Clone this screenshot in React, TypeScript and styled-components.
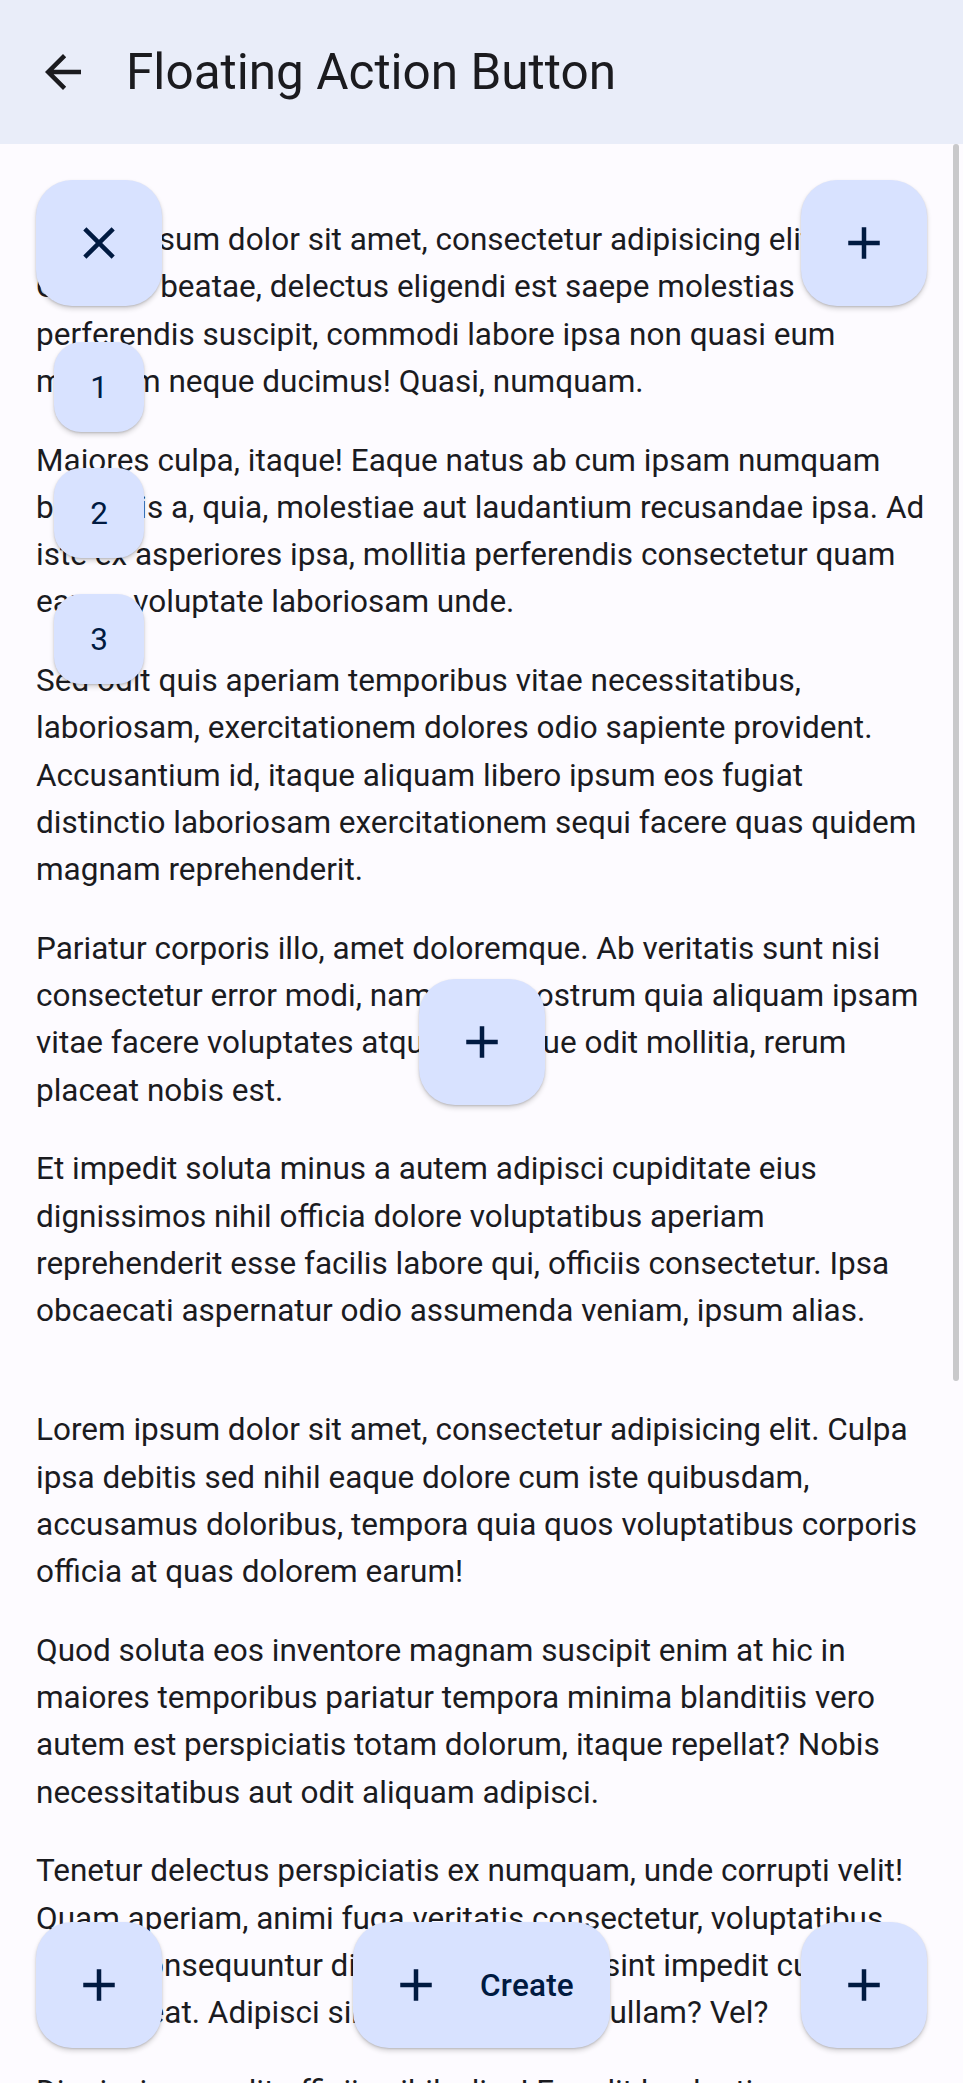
import React from 'react'
import styled, { createGlobalStyle } from 'styled-components'

const GlobalStyle = createGlobalStyle`
  html, body {
    margin: 0;
    padding: 0;
    background: #fdfbff;
  }
  body {
    font-family: Roboto, "Liberation Sans", sans-serif;
    color: #1b1b1f;
  }
`

const Screen = styled.div`
  position: relative;
  width: 100%;
  height: 2083px;
  overflow: hidden;
  display: flex;
  flex-direction: column;
  background: #fdfbff;
`

const TopBar = styled.header`
  flex: 0 0 144px;
  display: flex;
  align-items: center;
  gap: 36px;
  padding-left: 36px;
  background: #e9edf9;
`

const Title = styled.h1`
  margin: 0;
  font-size: 49.5px;
  font-weight: 400;
  color: #1b1b1f;
  letter-spacing: 0;
`

const Content = styled.main`
  position: relative;
  flex: 1;
  overflow: hidden;
  padding: 72px 36px 0;
`

const Block = styled.section<{ $gap?: number }>`
  margin-top: ${p => p.$gap ?? 0}px;
`

const Para = styled.p`
  margin: 0 0 31.5px;
  font-size: 31.5px;
  line-height: 47.25px;
  color: #1b1b1f;
`

const ScrollThumb = styled.div`
  position: absolute;
  top: 0;
  right: 4px;
  width: 6px;
  height: 1237px;
  border-radius: 3px;
  background: #c9c9cb;
`

const Fab = styled.button<{ $size?: 'small' | 'large' }>`
  display: flex;
  align-items: center;
  justify-content: center;
  width: ${p => (p.$size === 'small' ? 90 : 126)}px;
  height: ${p => (p.$size === 'small' ? 90 : 126)}px;
  padding: 0;
  border: none;
  border-radius: ${p => (p.$size === 'small' ? 27 : 36)}px;
  background: #d8e2ff;
  color: #001a41;
  font-family: Roboto, "Liberation Sans", sans-serif;
  font-size: 31.5px;
  box-shadow: 0 3px 5px rgba(0, 0, 0, 0.16), 0 1px 2px rgba(0, 0, 0, 0.14);
  cursor: pointer;
`

const ExtendedFab = styled(Fab)`
  width: auto;
  padding: 0 36px;
  gap: 37px;
  font-weight: 500;
  letter-spacing: 0.2px;
`

const TopRow = styled.div`
  position: absolute;
  top: 180px;
  left: 36px;
  right: 36px;
  display: flex;
  justify-content: space-between;
  align-items: flex-start;
`

const FabColumn = styled.div`
  display: flex;
  flex-direction: column;
  align-items: center;
  gap: 36px;
`

const CenterSpot = styled.div`
  position: absolute;
  top: 50%;
  left: 50%;
  transform: translate(-50%, -50%);
`

const BottomRow = styled.div`
  position: absolute;
  bottom: 35px;
  left: 36px;
  right: 36px;
  display: flex;
  justify-content: space-between;
  align-items: center;
`

const Icon = ({ d, size = 54 }: { d: string, size?: number }) => (
  <svg width={size} height={size} viewBox="0 0 24 24" fill="currentColor" aria-hidden="true">
    <path d={d} />
  </svg>
)

const ADD = 'M19 13h-6v6h-2v-6H5v-2h6V5h2v6h6v2z'
const CLOSE = 'M19 6.41L17.59 5 12 10.59 6.41 5 5 6.41 10.59 12 5 17.59 6.41 19 12 13.41 17.59 19 19 17.59 13.41 12z'
const BACK = 'M20 11H7.83l5.59-5.59L12 4l-8 8 8 8 1.41-1.41L7.83 13H20v-2z'

const firstBlock = [
  'Lorem ipsum dolor sit amet, consectetur adipisicing elit. Quaeras beatae, delectus eligendi est saepe molestias perferendis suscipit, commodi labore ipsa non quasi eum magnam neque ducimus! Quasi, numquam.',
  'Maiores culpa, itaque! Eaque natus ab cum ipsam numquam blanditiis a, quia, molestiae aut laudantium recusandae ipsa. Ad iste ex asperiores ipsa, mollitia perferendis consectetur quam earum voluptate laboriosam unde.',
  'Sed odit quis aperiam temporibus vitae necessitatibus, laboriosam, exercitationem dolores odio sapiente provident. Accusantium id, itaque aliquam libero ipsum eos fugiat distinctio laboriosam exercitationem sequi facere quas quidem magnam reprehenderit.',
  'Pariatur corporis illo, amet doloremque. Ab veritatis sunt nisi consectetur error modi, nam quod nostrum quia aliquam ipsam vitae facere voluptates atque sit neque odit mollitia, rerum placeat nobis est.',
  'Et impedit soluta minus a autem adipisci cupiditate eius dignissimos nihil officia dolore voluptatibus aperiam reprehenderit esse facilis labore qui, officiis consectetur. Ipsa obcaecati aspernatur odio assumenda veniam, ipsum alias.'
]

const secondBlock = [
  'Lorem ipsum dolor sit amet, consectetur adipisicing elit. Culpa ipsa debitis sed nihil eaque dolore cum iste quibusdam, accusamus doloribus, tempora quia quos voluptatibus corporis officia at quas dolorem earum!',
  'Quod soluta eos inventore magnam suscipit enim at hic in maiores temporibus pariatur tempora minima blanditiis vero autem est perspiciatis totam dolorum, itaque repellat? Nobis necessitatibus aut odit aliquam adipisci.',
  'Tenetur delectus perspiciatis ex numquam, unde corrupti velit! Quam aperiam, animi fuga veritatis consectetur, voluptatibus eaque consequuntur dignissimos magni sint impedit cumque aut placeat. Adipisci sint molestias quos ullam? Vel?',
  'Dignissimos velit officiis nihil, alias! Ea odit laudantium tempore, numquam magnam voluptatem.'
]

export default function App () {
  return (
    <>
      <GlobalStyle />
      <Screen>
        <TopBar>
          <Icon d={BACK} />
          <Title>Floating Action Button</Title>
        </TopBar>
        <Content>
          <Block>
            {firstBlock.map(text => <Para key={text}>{text}</Para>)}
          </Block>
          <Block $gap={72}>
            {secondBlock.map(text => <Para key={text}>{text}</Para>)}
          </Block>
          <ScrollThumb />
        </Content>

        <TopRow>
          <FabColumn>
            <Fab><Icon d={CLOSE} /></Fab>
            <Fab $size="small">1</Fab>
            <Fab $size="small">2</Fab>
            <Fab $size="small">3</Fab>
          </FabColumn>
          <Fab><Icon d={ADD} /></Fab>
        </TopRow>

        <CenterSpot>
          <Fab><Icon d={ADD} /></Fab>
        </CenterSpot>

        <BottomRow>
          <Fab><Icon d={ADD} /></Fab>
          <ExtendedFab>
            <Icon d={ADD} />
            Create
          </ExtendedFab>
          <Fab><Icon d={ADD} /></Fab>
        </BottomRow>
      </Screen>
    </>
  )
}
